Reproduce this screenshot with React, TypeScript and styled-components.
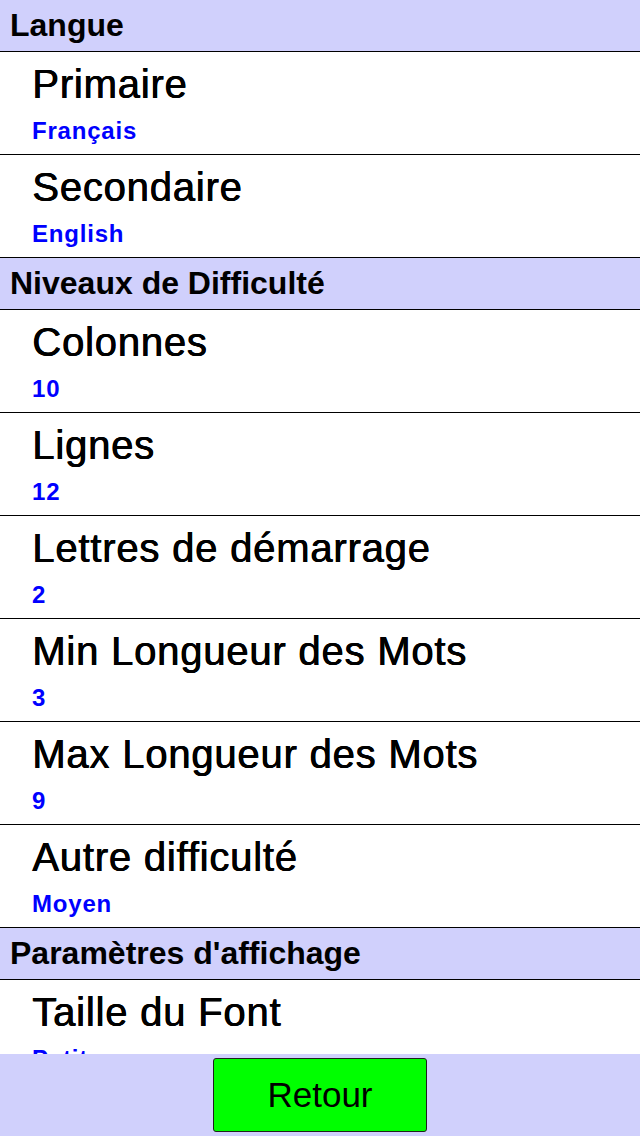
import React from "react";
import styled, { createGlobalStyle } from "styled-components";

const Global = createGlobalStyle`
  html, body { margin: 0; padding: 0; background: #ffffff; }
  body { font-family: "Liberation Sans", Arial, sans-serif; }
`;

const Page = styled.div`
  display: flex;
  flex-direction: column;
  height: 1136px;
  width: 640px;
  overflow: hidden;
`;

const List = styled.div`
  flex: 1;
  overflow: hidden;
  background: #ffffff;
`;

const SectionHeader = styled.div`
  height: 52px;
  box-sizing: border-box;
  background: #d0d0fc;
  border-bottom: 1px solid #000000;
  padding: 7px 0 0 10px;
  font-size: 32px;
  font-weight: bold;
  color: #000000;
  line-height: 36px;
  white-space: nowrap;
`;

const Row = styled.div`
  height: 103px;
  box-sizing: border-box;
  border-bottom: 1px solid #000000;
  padding: 10px 0 0 32px;
  display: flex;
  flex-direction: column;
`;

const Title = styled.div`
  font-size: 40px;
  line-height: 44px;
  letter-spacing: 0.8px;
  color: #000000;
  text-shadow: 0.7px 0 0 #000000, 0.35px 0 0 #000000;
  white-space: nowrap;
`;

const Value = styled.div`
  margin-top: 11px;
  font-size: 24px;
  font-weight: bold;
  line-height: 28px;
  letter-spacing: 0.8px;
  color: #0000ff;
`;

const Footer = styled.div`
  height: 82px;
  flex: none;
  background: #d0d0fc;
  display: flex;
  justify-content: center;
  align-items: center;
`;

const Button = styled.button`
  width: 214px;
  height: 74px;
  background: #00ff00;
  border: 1px solid #202020;
  border-radius: 3px;
  font-family: "Liberation Sans", Arial, sans-serif;
  font-size: 35px;
  color: #000000;
  padding: 0;
`;

type Item = { title: string; value: string };
type Section = { header: string; items: Item[] };

const sections: Section[] = [
  {
    header: "Langue",
    items: [
      { title: "Primaire", value: "Français" },
      { title: "Secondaire", value: "English" },
    ],
  },
  {
    header: "Niveaux de Difficulté",
    items: [
      { title: "Colonnes", value: "10" },
      { title: "Lignes", value: "12" },
      { title: "Lettres de démarrage", value: "2" },
      { title: "Min Longueur des Mots", value: "3" },
      { title: "Max Longueur des Mots", value: "9" },
      { title: "Autre difficulté", value: "Moyen" },
    ],
  },
  {
    header: "Paramètres d'affichage",
    items: [{ title: "Taille du Font", value: "Petit" }],
  },
];

export default function App() {
  return (
    <>
      <Global />
      <Page>
        <List>
          {sections.map((s) => (
            <React.Fragment key={s.header}>
              <SectionHeader>{s.header}</SectionHeader>
              {s.items.map((it) => (
                <Row key={it.title}>
                  <Title>{it.title}</Title>
                  <Value>{it.value}</Value>
                </Row>
              ))}
            </React.Fragment>
          ))}
        </List>
        <Footer>
          <Button>Retour</Button>
        </Footer>
      </Page>
    </>
  );
}
